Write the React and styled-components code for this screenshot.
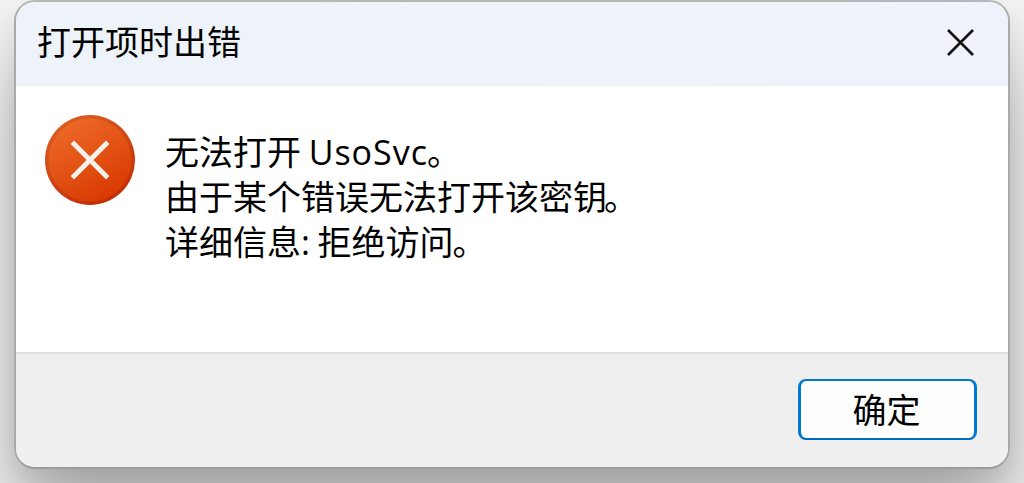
import React from "react";
import styled, { createGlobalStyle } from "styled-components";

const GlobalStyle = createGlobalStyle`
  * { box-sizing: border-box; }
  body {
    margin: 0;
    overflow: hidden;
    background: #f4f4f4;
    font-family: "Noto Sans CJK SC", sans-serif;
    color: #000;
  }
`;

const Desktop = styled.main`
  height: 483px;
  padding: 0 14px;
  overflow: hidden;
`;

const Dialog = styled.section`
  display: flex;
  flex-direction: column;
  width: 996px;
  height: 469px;
  border: 2px solid;
  border-color: #b6b6b6 #aaaaaa #9c9c9c #aaaaaa;
  border-radius: 21px;
  background: #fff;
  background-clip: padding-box;
  box-shadow: 0 56px 80px rgba(0, 0, 0, 0.3), 0 8px 24px rgba(0, 0, 0, 0.08);
  overflow: hidden;
`;

const TitleBar = styled.header`
  display: flex;
  align-items: center;
  justify-content: space-between;
  height: 84px;
  flex: none;
  padding: 0 33px 3px 21px;
  background: linear-gradient(90deg, #edf3f8, #eff3fa 60%, #eff2fa);
`;

const Title = styled.h1`
  margin: 0;
  padding-bottom: 5px;
  font-size: 34px;
  font-weight: 400;
  line-height: 45px;
`;

const CloseButton = styled.button`
  display: flex;
  padding: 0;
  border: 0;
  background: none;
  svg { display: block; }
`;

const Content = styled.div`
  display: flex;
  flex: 1;
  gap: 29px;
  padding: 28px 28px 0;
`;

const ErrorIcon = styled.svg`
  flex: none;
  width: 92px;
  height: 92px;
`;

const Message = styled.div`
  padding-top: 14px;
  font-size: 34px;
  line-height: 45px;
  white-space: pre;
`;

const Line = styled.p`
  margin: 0;
`;

const Latin = styled.span`
  font-family: "Open Sans", sans-serif;
  font-size: 34px;
  line-height: 1;
  letter-spacing: ${(p) => p.$tracking || "normal"};
`;

const FullStop = styled.span`
  margin-left: ${(p) => p.$shift || "-3px"};
`;

const Footer = styled.footer`
  display: flex;
  justify-content: flex-end;
  align-items: flex-start;
  height: 115px;
  flex: none;
  padding: 25px 31px 0 0;
  border-top: 2px solid #dfdfdf;
  background: #efefef;
`;

const ConfirmButton = styled.button`
  width: 179px;
  height: 61px;
  padding: 0 2px 2px 0;
  border: 2px solid #0078d4;
  border-bottom-color: #006cbe;
  border-left-width: 3px;
  border-right-width: 3px;
  border-radius: 8px;
  background: #fdfdfd;
  color: #000;
  font-family: inherit;
  font-size: 34px;
  line-height: 45px;
`;

export default function App() {
  return (
    <>
      <GlobalStyle />
      <Desktop>
        <Dialog role="alertdialog" aria-labelledby="dialog-title">
          <TitleBar>
            <Title id="dialog-title">打开项时出错</Title>
            <CloseButton aria-label="关闭">
              <svg width="28" height="28" viewBox="0 0 28 28">
                <path d="M1 1 26 26M26 1 1 26" stroke="#111" strokeWidth="2.6" />
              </svg>
            </CloseButton>
          </TitleBar>
          <Content>
            <ErrorIcon viewBox="0 0 92 92" aria-hidden="true">
              <defs>
                <linearGradient id="disc" x1="0.25" y1="0.05" x2="0.75" y2="0.95">
                  <stop offset="0" stopColor="#ec6826" />
                  <stop offset="1" stopColor="#d93a02" />
                </linearGradient>
                <linearGradient id="rim" x1="0.25" y1="0.05" x2="0.75" y2="0.95">
                  <stop offset="0" stopColor="#da5c22" />
                  <stop offset="1" stopColor="#c22e04" />
                </linearGradient>
              </defs>
              <circle cx="46" cy="46" r="45" fill="url(#rim)" />
              <circle cx="46" cy="46" r="41.5" fill="url(#disc)" />
              <path d="M30 30 62 62M62 30 30 62" stroke="#f9f1ee" strokeWidth="4.8" strokeLinecap="square" />
            </ErrorIcon>
            <Message>
              <Line>无法打开 <Latin $tracking="1px">UsoSvc</Latin><FullStop $shift="-1px">。</FullStop></Line>
              <Line>由于某个错误无法打开该密钥<FullStop>。</FullStop></Line>
              <Line>详细信息<Latin>:</Latin> 拒绝访问<FullStop $shift="-1px">。</FullStop></Line>
            </Message>
          </Content>
          <Footer>
            <ConfirmButton>确定</ConfirmButton>
          </Footer>
        </Dialog>
      </Desktop>
    </>
  );
}
